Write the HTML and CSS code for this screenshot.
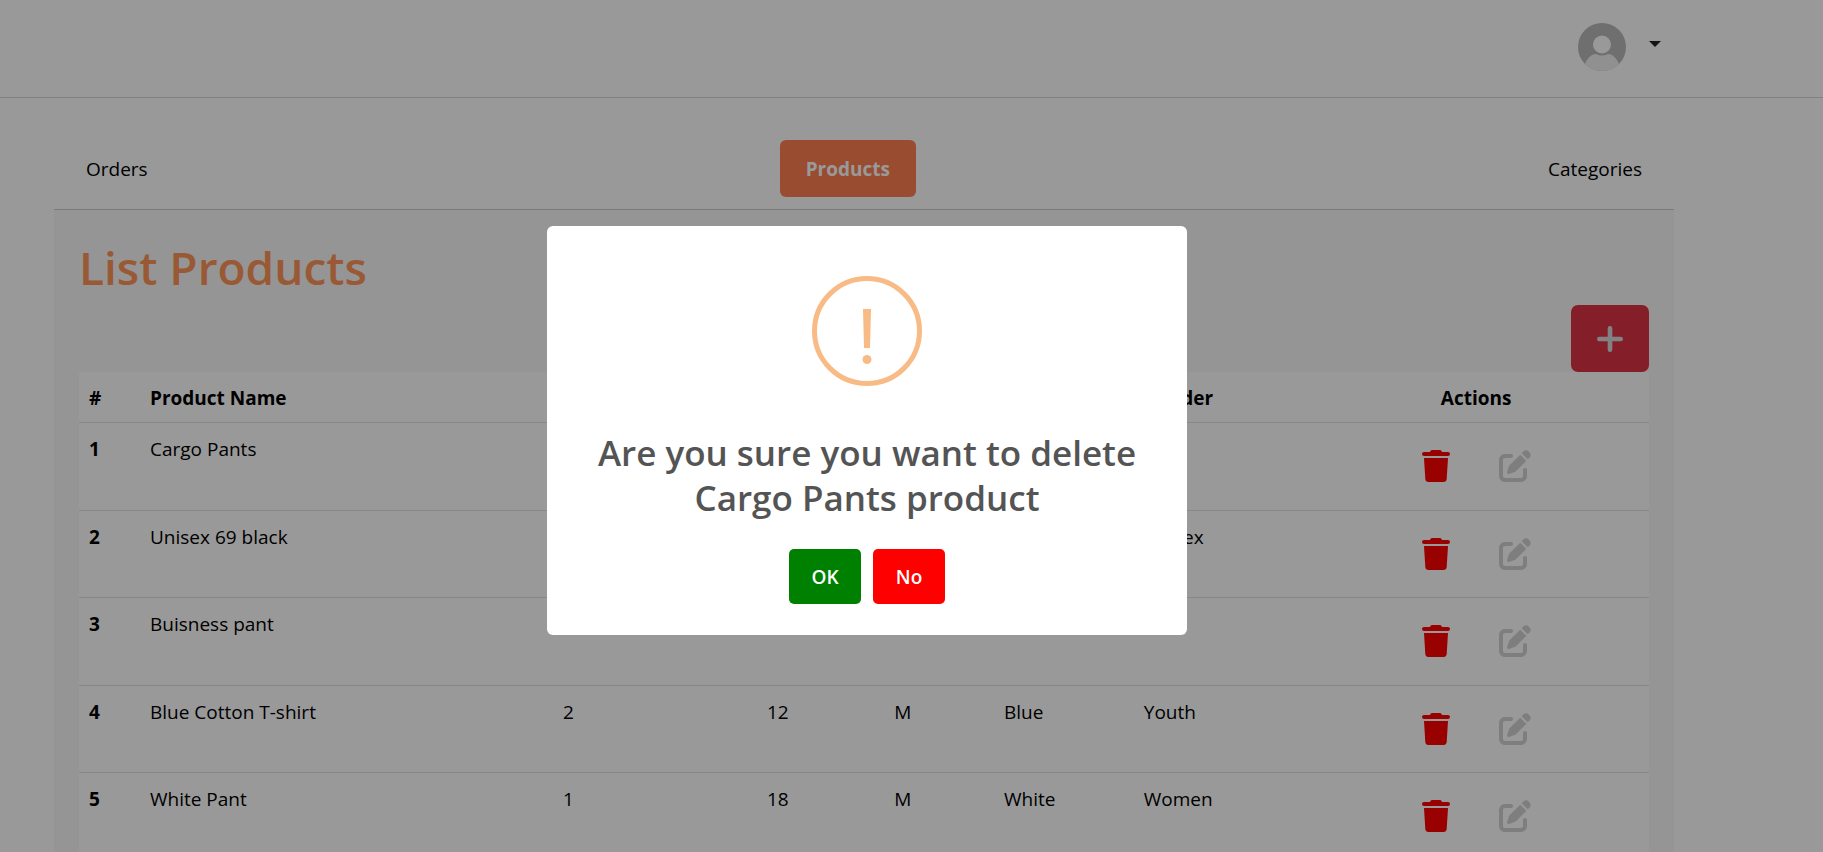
FILE: index.html
```html
<!DOCTYPE html>
<html lang="en">
<head>
<meta charset="utf-8">
<title>List Products</title>
<link rel="stylesheet" href="styles.css">
</head>
<body>
<svg class="sprite" aria-hidden="true">
  <symbol id="trash" viewBox="0 0 448 512"><path d="M135.2 17.7L128 32H32C14.3 32 0 46.3 0 64S14.3 96 32 96H416c17.7 0 32-14.3 32-32s-14.3-32-32-32H320l-7.2-14.3C307.4 6.8 296.3 0 284.2 0H163.8c-12.1 0-23.2 6.8-28.6 17.7zM416 128H32L53.2 467c1.6 25.3 22.6 45 47.9 45H346.9c25.3 0 46.3-19.7 47.9-45L416 128z"/></symbol>
  <symbol id="edit" viewBox="0 0 512 512"><path d="M471.6 21.7c-21.9-21.9-57.3-21.9-79.2 0L362.3 51.7l97.9 97.9 30.1-30.1c21.9-21.9 21.9-57.3 0-79.2L471.6 21.7zm-299.2 220c-6.1 6.1-10.8 13.6-13.5 21.9l-29.6 88.8c-2.9 8.6-.6 18.1 5.8 24.6s15.9 8.7 24.6 5.8l88.8-29.6c8.2-2.7 15.7-7.4 21.9-13.5L437.7 172.3 339.7 74.3 172.4 241.7zM96 64C43 64 0 107 0 160V416c0 53 43 96 96 96H352c53 0 96-43 96-96V320c0-17.7-14.3-32-32-32s-32 14.3-32 32v96c0 17.7-14.3 32-32 32H96c-17.7 0-32-14.3-32-32V160c0-17.7 14.3-32 32-32h96c17.7 0 32-14.3 32-32s-14.3-32-32-32H96z"/></symbol>
  <symbol id="plus" viewBox="0 0 28 32"><path d="M14 5.300V26.700M3.300 16H24.700" fill="none" stroke="currentColor" stroke-width="4.600" stroke-linecap="round"/></symbol>
</svg>

<header class="topbar">
  <button class="account" type="button" aria-label="Account menu">
    <svg class="avatar" viewBox="0 0 48 48" aria-hidden="true">
      <clipPath id="round"><circle cx="24" cy="24" r="24"/></clipPath>
      <g clip-path="url(#round)">
        <rect width="48" height="48" fill="#b9b9b9"/>
        <path d="M6 48C6 37 13 31 18 31Q24 34 30 31C35 31 42 37 42 48Z" fill="#f1f1f1"/>
        <circle cx="24" cy="21.500" r="9" fill="#fff"/>
      </g>
    </svg>
    <span class="caret"></span>
  </button>
</header>

<main class="page">
  <nav class="tabs">
    <a class="tab" href="#orders">Orders</a>
    <a class="tab tab-active" href="#products">Products</a>
    <a class="tab" href="#categories">Categories</a>
  </nav>
  <section class="panel">
    <h1 class="heading">List Products</h1>
    <div class="toolbar">
      <button class="add" type="button" aria-label="Add product"><svg class="icon icon-narrow"><use href="#plus"/></svg></button>
    </div>
    <table class="products">
      <colgroup><col class="c-num"><col class="c-name"><col class="c-qty"><col class="c-price"><col class="c-size"><col class="c-color"><col class="c-gender"><col class="c-actions"></colgroup>
      <thead>
        <tr><th>#</th><th>Product Name</th><th>Quantity</th><th>Price</th><th>Size</th><th>Color</th><th>Gender</th><th class="center">Actions</th></tr>
      </thead>
      <tbody>
        <tr><th>1</th><td>Cargo Pants</td><td></td><td></td><td></td><td></td><td></td><td><div class="actions"><button class="act del" type="button" aria-label="Delete"><svg class="icon icon-narrow"><use href="#trash"/></svg></button><button class="act edit" type="button" aria-label="Edit"><svg class="icon"><use href="#edit"/></svg></button></div></td></tr>
        <tr><th>2</th><td>Unisex 69 black</td><td></td><td></td><td></td><td></td><td>Unisex</td><td><div class="actions"><button class="act del" type="button" aria-label="Delete"><svg class="icon icon-narrow"><use href="#trash"/></svg></button><button class="act edit" type="button" aria-label="Edit"><svg class="icon"><use href="#edit"/></svg></button></div></td></tr>
        <tr><th>3</th><td>Buisness pant</td><td></td><td></td><td></td><td>Beige</td><td></td><td><div class="actions"><button class="act del" type="button" aria-label="Delete"><svg class="icon icon-narrow"><use href="#trash"/></svg></button><button class="act edit" type="button" aria-label="Edit"><svg class="icon"><use href="#edit"/></svg></button></div></td></tr>
        <tr><th>4</th><td>Blue Cotton T-shirt</td><td>2</td><td>12</td><td>M</td><td>Blue</td><td>Youth</td><td><div class="actions"><button class="act del" type="button" aria-label="Delete"><svg class="icon icon-narrow"><use href="#trash"/></svg></button><button class="act edit" type="button" aria-label="Edit"><svg class="icon"><use href="#edit"/></svg></button></div></td></tr>
        <tr><th>5</th><td>White Pant</td><td>1</td><td>18</td><td>M</td><td>White</td><td>Women</td><td><div class="actions"><button class="act del" type="button" aria-label="Delete"><svg class="icon icon-narrow"><use href="#trash"/></svg></button><button class="act edit" type="button" aria-label="Edit"><svg class="icon"><use href="#edit"/></svg></button></div></td></tr>
      </tbody>
    </table>
  </section>
</main>

<div class="overlay">
  <div class="modal" role="dialog" aria-modal="true" aria-labelledby="ask">
    <svg class="warning" viewBox="0 0 110 110" aria-hidden="true">
      <circle cx="55" cy="55" r="52.500" fill="none" stroke="#f8bb86" stroke-width="5"/>
      <path d="M51 33H59L58 72H52Z" fill="#f8bb86"/>
      <circle cx="55" cy="83.500" r="4.500" fill="#f8bb86"/>
    </svg>
    <h2 class="question" id="ask">Are you sure you want to delete Cargo Pants product</h2>
    <div class="choices">
      <button class="choice yes" type="button">OK</button>
      <button class="choice no" type="button">No</button>
    </div>
  </div>
</div>
</body>
</html>
```
FILE: styles.css
```css
* { box-sizing: border-box; }
html, body { height: 100%; }
body {
  margin: 0;
  overflow: hidden;
  background: #fff;
  color: #000;
  font: 19px/30px "Segoe UI", "Open Sans", "Noto Sans", sans-serif;
}
button { margin: 0; padding: 0; border: 0; background: none; font: inherit; cursor: pointer; }
.sprite { position: absolute; width: 0; height: 0; }

.topbar {
  display: flex;
  justify-content: flex-end;
  height: 98px;
  padding: 23px 162px 0 0;
  border-bottom: 1px solid #d8d8d8;
}
.account { display: flex; gap: 23px; height: 48px; }
.avatar { width: 48px; height: 48px; }
.caret { margin-top: 18px; border: 6px solid transparent; border-top-color: #212529; border-bottom: 0; }

.page { margin: 0 149px 0 54px; }
.tabs {
  display: flex;
  justify-content: space-between;
  align-items: center;
  height: 112px;
  padding: 42px 32px 12px;
  border-bottom: 1px solid #ccc;
}
.tab { color: #000; text-decoration: none; }
.tab-active {
  padding: 14px 26px 13px;
  border-radius: 6px;
  background: #ff7f50;
  color: #fff;
  font-weight: 700;
}

.panel { min-height: 642px; padding: 27px 25px 25px; background: #f8f8f8; }
.heading { margin: 0; padding-bottom: 8px; color: #ff9457; font-size: 46px; line-height: 60px; font-weight: 600; }
.toolbar { display: flex; justify-content: flex-end; }
.add {
  display: grid;
  place-items: center;
  width: 78px;
  height: 67px;
  border-radius: 7px;
  background: #dc3545;
  color: #d9d9dc;
}
.icon { display: block; width: 32px; height: 32px; fill: currentColor; }
.icon-narrow { width: 28px; }

.products { width: 100%; table-layout: fixed; border-collapse: separate; border-spacing: 0; background: #fff; }
.products th, .products td { padding: 11px 10px 9px; border-bottom: 1px solid #dee2e6; text-align: left; vertical-align: top; }
.products .center { text-align: center; }
.products tbody tr { height: 88px; }
.products tbody tr:nth-child(even) { height: 87px; }
.c-num { width: 61px; }
.c-name { width: 26.300%; }
.c-qty { width: 13%; }
.c-price { width: 8.100%; }
.c-size { width: 7%; }
.c-color { width: 8.900%; }
.c-gender { width: 10.800%; }
.actions { display: flex; justify-content: center; gap: 49px; padding-top: 16px; }
.del { color: red; }
.edit { color: #d3d3d3; }

.overlay {
  position: fixed;
  inset: 0;
  display: grid;
  place-items: center;
  padding: 9px 89px 0 0;
  background: rgba(0, 0, 0, .4);
}
.modal {
  display: flex;
  flex-direction: column;
  align-items: center;
  width: 640px;
  max-width: 100%;
  padding: 50px 32px 31px;
  border-radius: 6px;
  background: #fff;
}
.warning { width: 110px; height: 110px; }
.question { margin: 44px 0 29px; color: #545454; font-size: 35px; line-height: 45px; font-weight: 600; text-align: center; }
.choices { display: flex; gap: 12px; }
.choice { width: 72px; height: 55px; border-radius: 5px; color: #fff; font-weight: 600; }
.yes { background: green; }
.no { background: red; }
```
